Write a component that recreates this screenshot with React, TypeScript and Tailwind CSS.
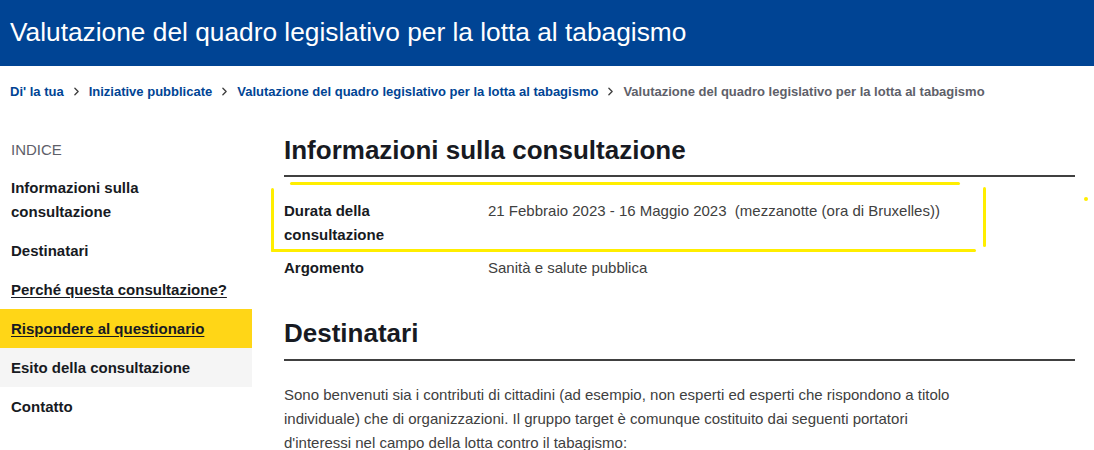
import { ChevronRight } from "lucide-react";

const crumbs = [
  "Di' la tua",
  "Iniziative pubblicate",
  "Valutazione del quadro legislativo per la lotta al tabagismo",
];

const toc = [
  { label: "Informazioni sulla consultazione", state: "plain" },
  { label: "Destinatari", state: "plain" },
  { label: "Perché questa consultazione?", state: "link" },
  { label: "Rispondere al questionario", state: "active" },
  { label: "Esito della consultazione", state: "hover" },
  { label: "Contatto", state: "plain" },
];

function TocItem({ label, state }: { label: string; state: string }) {
  const base = "block pl-[11px] pr-[24px] py-[7.5px] text-[15px] leading-[24px] font-bold text-[#171a22]";
  if (state === "active")
    return <li className={`${base} bg-[#ffd617] underline underline-offset-2`}>{label}</li>;
  if (state === "hover") return <li className={`${base} bg-[#f5f5f5]`}>{label}</li>;
  if (state === "link") return <li className={`${base} underline underline-offset-2`}>{label}</li>;
  return <li className={base}>{label}</li>;
}

export default function App() {
  return (
    <div className="w-[1094px] h-[450px] overflow-hidden bg-white font-['Liberation_Sans',Arial,sans-serif] text-[#404040]">
      <header className="h-[66px] bg-[#004494] flex items-center px-[10px]">
        <h1 className="text-[26.3px] text-white font-normal">
          Valutazione del quadro legislativo per la lotta al tabagismo
        </h1>
      </header>

      <nav className="flex items-center px-[10px] pt-[18px] text-[13px] leading-[15px] font-bold">
        {crumbs.map((c) => (
          <span key={c} className="flex items-center">
            <span className="text-[#004494]">{c}</span>
            <ChevronRight className="w-[13px] h-[13px] mx-[6px] text-[#404040]" strokeWidth={2.5} />
          </span>
        ))}
        <span className="text-[#5e6069]">
          Valutazione del quadro legislativo per la lotta al tabagismo
        </span>
      </nav>

      <div className="flex pt-[36px]">
        <aside className="w-[252px] shrink-0 pt-[3px]">
          <div className="px-[11px] text-[15px] leading-[24px] text-[#5e6069] uppercase mb-[6px]">Indice</div>
          <ul>
            {toc.map((t) => (
              <TocItem key={t.label} label={t.label} state={t.state} />
            ))}
          </ul>
        </aside>

        <main className="flex-1 pl-[32px] pr-[19px] relative">
          <h2 className="text-[26px] leading-[30px] font-bold text-[#171a22] pb-[10px] border-b-2 border-[#404040]">
            Informazioni sulla consultazione
          </h2>
          <dl className="mt-[22px] text-[15px] leading-[24px]">
            <div className="flex pb-[9px]">
              <dt className="w-[204px] shrink-0 font-bold text-[#171a22] pr-[80px]">Durata della consultazione</dt>
              <dd>21 Febbraio 2023 - 16 Maggio 2023&nbsp; (mezzanotte (ora di Bruxelles))</dd>
            </div>
            <div className="flex">
              <dt className="w-[204px] shrink-0 font-bold text-[#171a22]">Argomento</dt>
              <dd>Sanità e salute pubblica</dd>
            </div>
          </dl>

          <h2 className="mt-[38px] text-[26px] leading-[30px] font-bold text-[#171a22] pb-[11px] border-b-2 border-[#404040]">
            Destinatari
          </h2>
          <p className="mt-[22px] text-[15px] leading-[24px] max-w-[680px]">
            Sono benvenuti sia i contributi di cittadini (ad esempio, non esperti ed esperti che rispondono a titolo
            individuale) che di organizzazioni. Il gruppo target è comunque costituito dai seguenti portatori
            d'interessi nel campo della lotta contro il tabagismo:
          </p>

          {/* highlighter marks drawn over the table */}
          <span className="absolute left-[38px] top-[47px] w-[670px] h-[3px] bg-[#ffee00] rounded-full" />
          <span className="absolute left-[19px] top-[53px] w-[3px] h-[64px] bg-[#ffee00] rounded-full" />
          <span className="absolute left-[731px] top-[52px] w-[3px] h-[60px] bg-[#ffee00] rounded-full" />
          <span className="absolute left-[19px] top-[114px] w-[705px] h-[3px] bg-[#ffee00] rounded-full" />
          <span className="absolute left-[832px] top-[62px] w-[4px] h-[4px] bg-[#ffee00] rounded-full" />
        </main>
      </div>
    </div>
  );
}
